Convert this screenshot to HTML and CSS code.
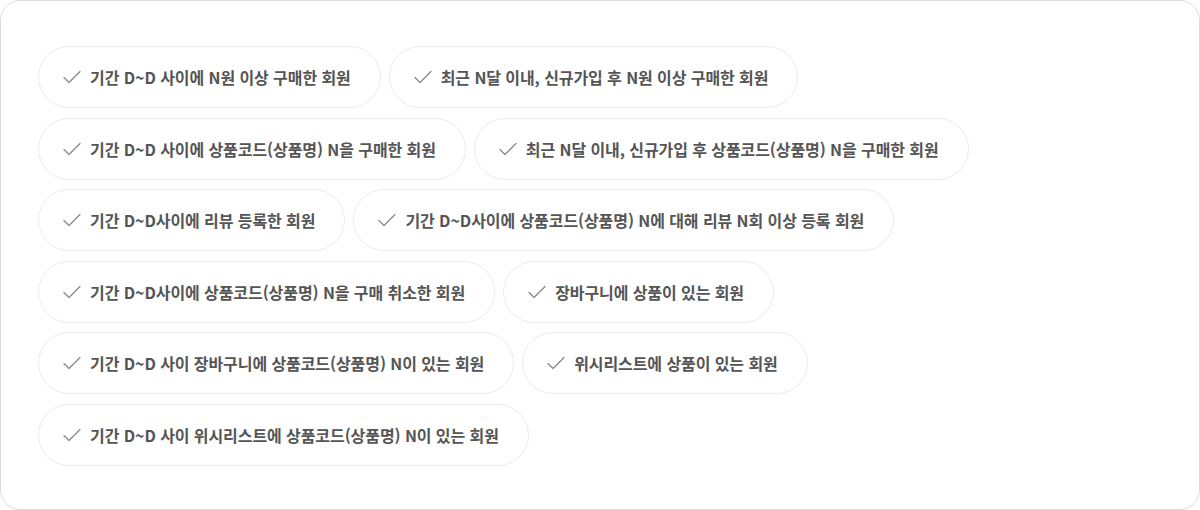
FILE: index.html
```html
<!DOCTYPE html>
<html lang="ko">
<head>
<meta charset="utf-8">
<link rel="stylesheet" href="styles.css">
</head>
<body>
<div class="card">
  <div class="chips">
    <button class="chip"><svg class="check" viewBox="0 0 18 14"><path d="M1 7.5 L6 12.5 L17 1.5"/></svg><span>기간 D~D 사이에 N원 이상 구매한 회원</span></button>
    <button class="chip"><svg class="check" viewBox="0 0 18 14"><path d="M1 7.5 L6 12.5 L17 1.5"/></svg><span>최근 N달 이내, 신규가입 후 N원 이상 구매한 회원</span></button>
    <button class="chip"><svg class="check" viewBox="0 0 18 14"><path d="M1 7.5 L6 12.5 L17 1.5"/></svg><span>기간 D~D 사이에 상품코드(상품명) N을 구매한 회원</span></button>
    <button class="chip"><svg class="check" viewBox="0 0 18 14"><path d="M1 7.5 L6 12.5 L17 1.5"/></svg><span>최근 N달 이내, 신규가입 후 상품코드(상품명) N을 구매한 회원</span></button>
    <button class="chip"><svg class="check" viewBox="0 0 18 14"><path d="M1 7.5 L6 12.5 L17 1.5"/></svg><span>기간 D~D사이에 리뷰 등록한 회원</span></button>
    <button class="chip"><svg class="check" viewBox="0 0 18 14"><path d="M1 7.5 L6 12.5 L17 1.5"/></svg><span>기간 D~D사이에 상품코드(상품명) N에 대해 리뷰 N회 이상 등록 회원</span></button>
    <button class="chip"><svg class="check" viewBox="0 0 18 14"><path d="M1 7.5 L6 12.5 L17 1.5"/></svg><span>기간 D~D사이에 상품코드(상품명) N을 구매 취소한 회원</span></button>
    <button class="chip"><svg class="check" viewBox="0 0 18 14"><path d="M1 7.5 L6 12.5 L17 1.5"/></svg><span>장바구니에 상품이 있는 회원</span></button>
    <button class="chip"><svg class="check" viewBox="0 0 18 14"><path d="M1 7.5 L6 12.5 L17 1.5"/></svg><span>기간 D~D 사이 장바구니에 상품코드(상품명) N이 있는 회원</span></button>
    <button class="chip"><svg class="check" viewBox="0 0 18 14"><path d="M1 7.5 L6 12.5 L17 1.5"/></svg><span>위시리스트에 상품이 있는 회원</span></button>
    <button class="chip"><svg class="check" viewBox="0 0 18 14"><path d="M1 7.5 L6 12.5 L17 1.5"/></svg><span>기간 D~D 사이 위시리스트에 상품코드(상품명) N이 있는 회원</span></button>
  </div>
</div>
</body>
</html>
```

FILE: styles.css
```css
* { box-sizing: border-box; }
html, body { margin: 0; padding: 0; background: #fff; }
body {
  font-family: "Noto Sans CJK KR", "Noto Sans", sans-serif;
  width: 1200px;
  height: 510px;
}
.card {
  width: 1200px;
  height: 510px;
  border: 1px solid #dcdcdc;
  border-radius: 20px;
  padding: 45px 37px;
  background: #fff;
}
.chips {
  display: flex;
  flex-wrap: wrap;
  column-gap: 8px;
  row-gap: 9.6px;
  width: 960px;
}
.chip {
  display: inline-flex;
  align-items: center;
  height: 62px;
  padding: 0 29px 0 24px;
  border: 1px solid #ececec;
  border-radius: 31px;
  background: #fff;
  font-family: inherit;
  font-size: 16px;
  font-weight: 700;
  letter-spacing: -0.08px;
  color: #555;
  gap: 9px;
  cursor: pointer;
}
.check {
  width: 18px;
  height: 14px;
  fill: none;
  stroke: #8a8a8a;
  stroke-width: 1.3;
  stroke-linecap: round;
  stroke-linejoin: round;
}
```
